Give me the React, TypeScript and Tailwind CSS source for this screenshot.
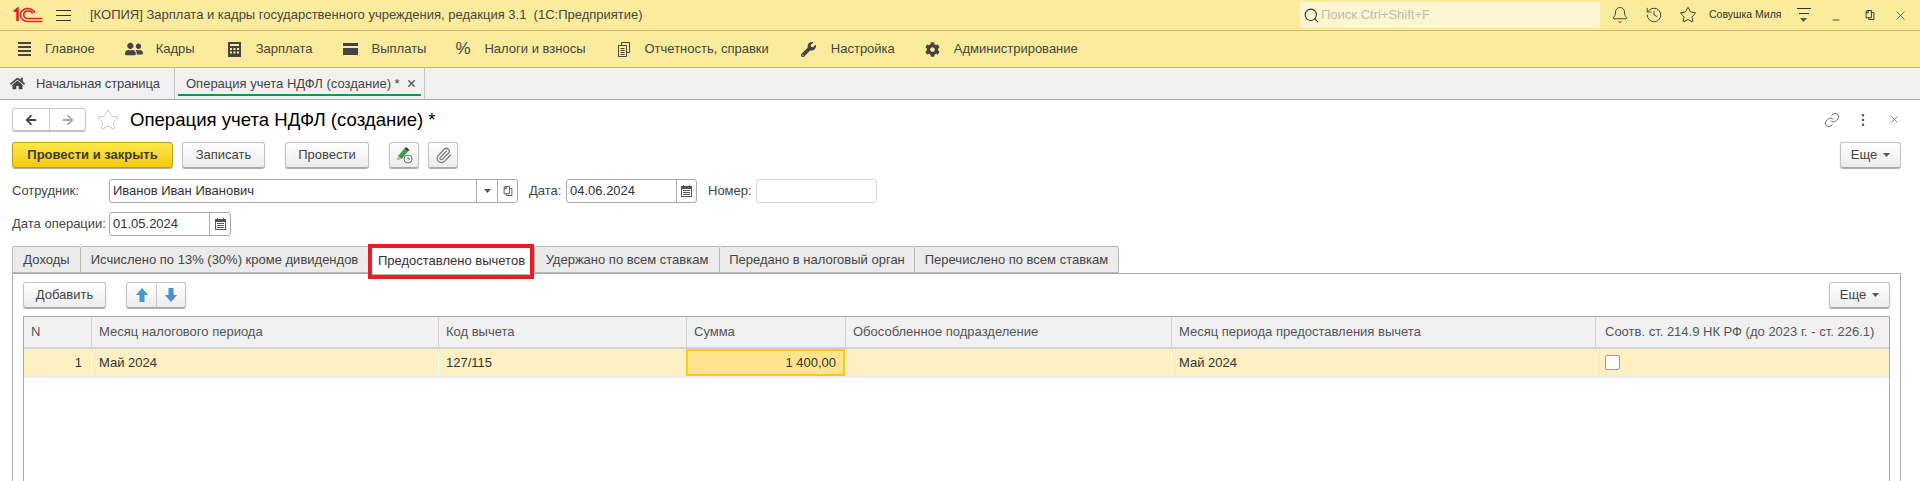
import React from "react";
import { Bell, History, Star, Search, Link, X, Paperclip, Minus, MoreVertical } from "lucide-react";
import { FaUserFriends, FaWrench, FaCog, FaHome, FaArrowLeft, FaArrowRight, FaRegCopy } from "react-icons/fa";

const Caret = () => (
  <svg width="7" height="4" viewBox="0 0 7 4" className="shrink-0"><path d="M0 0h7L3.500 4z" fill="#555" /></svg>
);

const Logo = () => (
  <svg width="30" height="16" viewBox="0 0 30 16" fill="none" stroke="#e2202c" strokeWidth="1.6">
    <path d="M1 4.500 L4.500 2 V14" strokeWidth="2.600" />
    <path d="M22 6 A7.500 6.500 0 1 0 15 14.500 H29.500" />
    <path d="M19.500 6.500 A4.500 3.800 0 1 0 15 11.500 H29.500" />
  </svg>
);

const Hamburger = ({ w = 15, gap = "gap-[4px]" }: { w?: number; gap?: string }) => (
  <div className={`flex flex-col ${gap}`} style={{ width: w }}>
    <div className="h-px bg-[#333]" />
    <div className="h-px bg-[#333]" />
    <div className="h-px bg-[#333]" />
  </div>
);

const MainMenuIcon = () => (
  <div className="flex flex-col gap-[2px] w-[13px]">
    <div className="h-[2px] bg-[#444]" />
    <div className="h-[2px] bg-[#444]" />
    <div className="h-[2px] bg-[#444]" />
    <div className="h-[2px] bg-[#444]" />
  </div>
);

const CalcIcon = () => (
  <svg width="13" height="15" viewBox="0 0 13 15"><path fillRule="evenodd" fill="#444" d="M0 0h13v15H0zM2 2v2h9V2zM2 6v2h2V6zm3.500 0v2h2V6zM9 6v2h2V6zM2 9.500v2h2v-2zm3.500 0v2h2v-2zm3.500 0v2h2v-2z" /></svg>
);

const WalletIcon = () => (
  <svg width="15" height="12" viewBox="0 0 15 12"><path fill="#444" d="M0 0h15v3H0zM0 5h15v7H0z" /><path d="M0 4h15" stroke="#fbec9d" /></svg>
);

const ReportIcon = () => (
  <svg width="12" height="15" viewBox="0 0 12 15" fill="none" stroke="#444"><path d="M3.500 3V.5h8v10H9" /><path d="M.5 3.500h8v11h-8zM2.500 6.500h4M2.500 8.500h4M2.500 10.500h4M2.500 12.500h4" /></svg>
);

const menu: [React.ReactNode, string, string, string][] = [
  [<MainMenuIcon />, "Главное", "w-[13px] ml-[18px]", "ml-[14px]"],
  [<FaUserFriends size={18} color="#444" />, "Кадры", "w-[18px] ml-[30px]", "ml-[13px]"],
  [<CalcIcon />, "Зарплата", "w-[13px] ml-[33px]", "ml-[15px]"],
  [<WalletIcon />, "Выплаты", "w-[15px] ml-[30px]", "ml-[14px]"],
  [<span className="text-[17px] text-[#444]">%</span>, "Налоги и взносы", "w-[15px] ml-[29px]", "ml-[14px]"],
  [<ReportIcon />, "Отчетность, справки", "w-[12px] ml-[32px]", "ml-[15px]"],
  [<FaWrench size={15} color="#444" />, "Настройка", "w-[16px] ml-[32px]", "ml-[14px]"],
  [<FaCog size={15} color="#444" />, "Администрирование", "w-[15px] ml-[30px]", "ml-[14px]"],
];

const Btn = ({ className = "", children }: { className?: string; children: React.ReactNode }) => (
  <div className={`h-[26px] flex items-center justify-center rounded-[3px] border border-[#c4c4c4] border-b-[#a8a8a8] bg-gradient-to-b from-white to-[#ececec] shadow-[0_1px_1px_#aaa] text-[#444] ${className}`}>
    {children}
  </div>
);

const Field = ({ className = "", children }: { className?: string; children?: React.ReactNode }) => (
  <div className={`h-[24px] flex items-stretch rounded-[3px] border border-[#aaa] bg-white text-[#333] ${className}`}>
    {children}
  </div>
);

const CalIcon = () => (
  <svg width="11" height="12" viewBox="0 0 11 12"><path fillRule="evenodd" fill="#555" d="M2 0h1v1h5V0h1v1h2v11H0V1h2zM1 4v7h9V4z" /><path fill="#555" d="M2 5h7v1H2zM2 7h7v1H2zM2 9h7v1H2z" /></svg>
);

const tabs: [string, string][] = [
  ["Доходы", "w-[69px]"],
  ["Исчислено по 13% (30%) кроме дивидендов", "w-[288px]"],
  ["Предоставлено вычетов", "w-[166px]"],
  ["Удержано по всем ставкам", "w-[185px]"],
  ["Передано в налоговый орган", "w-[195px]"],
  ["Перечислено по всем ставкам", "w-[204px]"],
];

const cols = "grid grid-cols-[67px_347px_248px_159px_326px_424px_1fr]";

const heads = ["N", "Месяц налогового периода", "Код вычета", "Сумма", "Обособленное подразделение", "Месяц периода предоставления вычета", "Соотв. ст. 214.9 НК РФ (до 2023 г. - ст. 226.1)"];

export default function App() {
  return (
    <div className="w-[1920px] h-[481px] overflow-hidden flex flex-col bg-white text-[13px] text-[#444] font-['Liberation_Sans',Arial,sans-serif]">
      {/* title bar */}
      <div className="h-[31px] shrink-0 flex items-center bg-[#fbec9d] border-b border-[#cdbd6a]">
        <div className="ml-[13px]"><Logo /></div>
        <div className="ml-[13px]"><Hamburger /></div>
        <div className="ml-[19px] w-[1150px] whitespace-pre text-[#444]">[КОПИЯ] Зарплата и кадры государственного учреждения, редакция 3.1  (1С:Предприятие)</div>
        <div className="ml-[60px] w-[300px] h-[26px] rounded-[2px] bg-[#fdf6d2] flex items-center pl-[3px] text-[#bdbdb0]" >
          <Search size={17} color="#333" strokeWidth={1.5} />
          <span className="ml-[1px]">Поиск Ctrl+Shift+F</span>
        </div>
        <Bell size={18} strokeWidth={1.2} color="#333" className="ml-[11px]" />
        <History size={18} strokeWidth={1.2} color="#333" className="ml-[16px]" />
        <Star size={18} strokeWidth={1.3} color="#333" className="ml-[16px]" />
        <span className="ml-[12px] w-[74px] text-[10.5px] text-[#333] whitespace-nowrap">Совушка Миля</span>
        <div className="ml-[13px] w-[15px] flex flex-col items-center gap-[4px]">
          <div className="h-px w-[14px] bg-[#333]" />
          <div className="h-px w-[10px] bg-[#333]" />
          <Caret />
        </div>
        <Minus size={10} color="#333" className="ml-[20px] mt-[9px]" />
        <FaRegCopy size={10} color="#333" className="ml-[24px] -scale-x-100" />
        <X size={15} strokeWidth={1.1} color="#333" className="ml-[18px]" />
      </div>

      {/* main menu */}
      <div className="h-[37px] shrink-0 flex items-center bg-[#fbec9d] border-b border-[#c8b860] text-[#444]">
        {menu.map(([icon, label, iconCls, textCls]) => (
          <React.Fragment key={label}>
            <div className={`flex items-center justify-center ${iconCls}`}>{icon}</div>
            <span className={`whitespace-nowrap ${textCls}`}>{label}</span>
          </React.Fragment>
        ))}
      </div>

      {/* window tabs */}
      <div className="h-[32px] shrink-0 flex items-stretch bg-[#f1f1f1] border-b border-[#a8a8a8]">
        <div className="w-[175px] flex items-center border-r border-[#c4c4c4] pl-[10px]">
          <FaHome size={15} color="#444" />
          <span className="ml-[11px] whitespace-nowrap tracking-[-0.1px]">Начальная страница</span>
        </div>
        <div className="relative w-[250px] flex items-center border-r border-[#c4c4c4] pl-[11px]">
          <span className="whitespace-nowrap">Операция учета НДФЛ (создание) *</span>
          <X size={11} strokeWidth={3} color="#555" className="ml-[6px]" />
          <div className="absolute left-[3px] right-[3px] bottom-[3px] h-[2px] bg-[#0d9a48]" />
        </div>
      </div>

      {/* form header */}
      <div className="h-[23px] mt-[8px] shrink-0 flex items-center pl-[12px] pr-[20px]">
        <div className="w-[74px] h-[23px] flex items-stretch rounded-[3px] border border-[#c4c4c4] shadow-[0_1px_1px_#bbb]">
          <div className="w-[37px] flex items-center justify-center border-r border-[#d0d0d0]"><FaArrowLeft size={12} color="#444" /></div>
          <div className="flex-1 flex items-center justify-center"><FaArrowRight size={12} color="#a8a8a8" /></div>
        </div>
        <Star size={24} strokeWidth={0.8} color="#b5b5b5" className="ml-[10px]" />
        <span className="ml-[10px] text-[18.6px] text-black whitespace-nowrap">Операция учета НДФЛ (создание) *</span>
        <Link size={16} strokeWidth={1.3} color="#555" className="ml-auto" />
        <MoreVertical size={16} strokeWidth={1.8} color="#555" className="ml-[15px]" />
        <X size={11} strokeWidth={1.5} color="#555" className="ml-[18px]" />
      </div>

      {/* command bar */}
      <div className="mt-[11px] shrink-0 flex items-center pl-[12px] pr-[19px]">
        <div className="w-[161px] h-[26px] flex items-center justify-center rounded-[3px] border border-[#b8a012] bg-gradient-to-b from-[#ffe94a] to-[#f5c900] shadow-[0_1px_1px_#aaa] font-bold text-[#3c3c20]">Провести и закрыть</div>
        <Btn className="w-[83px] ml-[9px]">Записать</Btn>
        <Btn className="w-[84px] ml-[20px]">Провести</Btn>
        <Btn className="w-[30px] ml-[20px]">
          <svg width="18" height="18" viewBox="0 0 18 18">
            <path d="M2 14 L3.500 9.500 L9.500 2.500 L13 5.500 L7 12.500z" fill="#37a04a" />
            <path d="M9.500 2.500 L11 1 L14.500 4 L13 5.500z" fill="#333" />
            <path d="M2 14 L3.500 9.500 L6 12.700z" fill="#e3b27a" />
            <circle cx="13" cy="13" r="4" fill="#fff" stroke="#53718c" />
            <path d="M13 10.800 V13 H15" stroke="#53718c" fill="none" />
          </svg>
        </Btn>
        <Btn className="w-[30px] ml-[9px]"><Paperclip size={17} strokeWidth={1.7} color="#777" /></Btn>
        <Btn className="w-[61px] ml-auto gap-[6px]">Еще <Caret /></Btn>
      </div>

      {/* employee row */}
      <div className="mt-[11px] shrink-0 flex items-center pl-[12px]">
        <span className="w-[97px]">Сотрудник:</span>
        <Field className="w-[409px]">
          <span className="flex-1 pl-[3px] leading-[22px]">Иванов Иван Иванович</span>
          <div className="w-[21px] flex items-center justify-center border-l border-[#aaa]"><Caret /></div>
          <div className="w-[20px] flex items-center justify-center border-l border-[#aaa]"><FaRegCopy size={10} color="#555" className="-scale-x-100" /></div>
        </Field>
        <span className="ml-[11px] w-[37px]">Дата:</span>
        <Field className="w-[131px]">
          <span className="flex-1 pl-[3px] leading-[22px]">04.06.2024</span>
          <div className="w-[20px] flex items-center justify-center border-l border-[#aaa]"><CalIcon /></div>
        </Field>
        <span className="ml-[11px] w-[48px]">Номер:</span>
        <Field className="w-[121px] border-[#d8d8d8]" />
      </div>

      {/* date row */}
      <div className="mt-[9px] shrink-0 flex items-center pl-[12px]">
        <span className="w-[97px] whitespace-nowrap">Дата операции:</span>
        <Field className="w-[122px]">
          <span className="flex-1 pl-[3px] leading-[22px]">01.05.2024</span>
          <div className="w-[21px] flex items-center justify-center border-l border-[#aaa]"><CalIcon /></div>
        </Field>
      </div>

      {/* tabs */}
      <div className="mt-[10px] h-[27px] shrink-0 flex items-stretch pl-[12px]">
        {tabs.map(([t, w], i) => (
          <div key={t} className={`relative ${w} flex items-center justify-center whitespace-nowrap rounded-t-[2px] border border-[#b8b8b8] ${i === 0 ? "" : "border-l-0"} ${i === 2 ? "bg-white text-[#333] h-[29px]" : "bg-[#ebebeb] text-[#444]"}`}>
            {t}
            {i === 2 && <div className="absolute -left-[1px] -top-[3px] w-[166px] h-[35px] border-4 border-[#ed1c24]" />}
          </div>
        ))}
      </div>

      {/* panel */}
      <div className="flex-1 min-h-0 ml-[12px] w-[1889px] border border-b-0 border-[#aaa] flex flex-col pl-[10px] pr-[10px]">
        <div className="mt-[8px] shrink-0 flex items-center">
          <Btn className="w-[83px]">Добавить</Btn>
          <Btn className="w-[60px] ml-[20px] !justify-start">
            <div className="w-[30px] h-full flex items-center justify-center border-r border-[#c8c8c8]">
              <svg width="12" height="14" viewBox="0 0 12 14"><path d="M6 0 L12 7 H8.500 V14 H3.500 V7 H0z" fill="#3d9bd8" /></svg>
            </div>
            <div className="flex-1 flex items-center justify-center">
              <svg width="12" height="14" viewBox="0 0 12 14"><path d="M6 14 L12 7 H8.500 V0 H3.500 V7 H0z" fill="#4a8fd0" /></svg>
            </div>
          </Btn>
          <Btn className="w-[61px] ml-auto gap-[6px]">Еще <Caret /></Btn>
        </div>

        <div className="mt-[8px] flex-1 min-h-0 border border-b-0 border-[#a8a8a8] flex flex-col">
          <div className={`${cols} h-[32px] shrink-0 bg-[#f1f1f1] border-b-2 border-[#d2d2d2] text-[#555]`}>
            {heads.map((h, i) => (
              <div key={h} className={`flex items-center whitespace-nowrap ${i === 6 ? "pl-[9px]" : "pl-[7px]"} ${i > 0 ? "border-l border-[#d0d0d0]" : ""}`}>{h}</div>
            ))}
          </div>
          <div className={`${cols} h-[29px] shrink-0 bg-[#fdf1c3] border-b-2 border-[#ececec] text-[#333]`}>
            <div className="flex items-center justify-end pr-[9px]">1</div>
            <div className="flex items-center pl-[7px] border-l border-white">Май 2024</div>
            <div className="flex items-center pl-[7px] border-l border-white">127/115</div>
            <div className="flex items-center justify-end pr-[7px] bg-[#ffe48f] border-2 border-[#fcc81e]">1 400,00</div>
            <div className="border-l border-white" />
            <div className="flex items-center pl-[7px] border-l border-white">Май 2024</div>
            <div className="flex items-center pl-[9px] border-l border-white">
              <div className="w-[15px] h-[15px] rounded-[2px] bg-white border border-[#999]" />
            </div>
          </div>
        </div>
      </div>
    </div>
  );
}
